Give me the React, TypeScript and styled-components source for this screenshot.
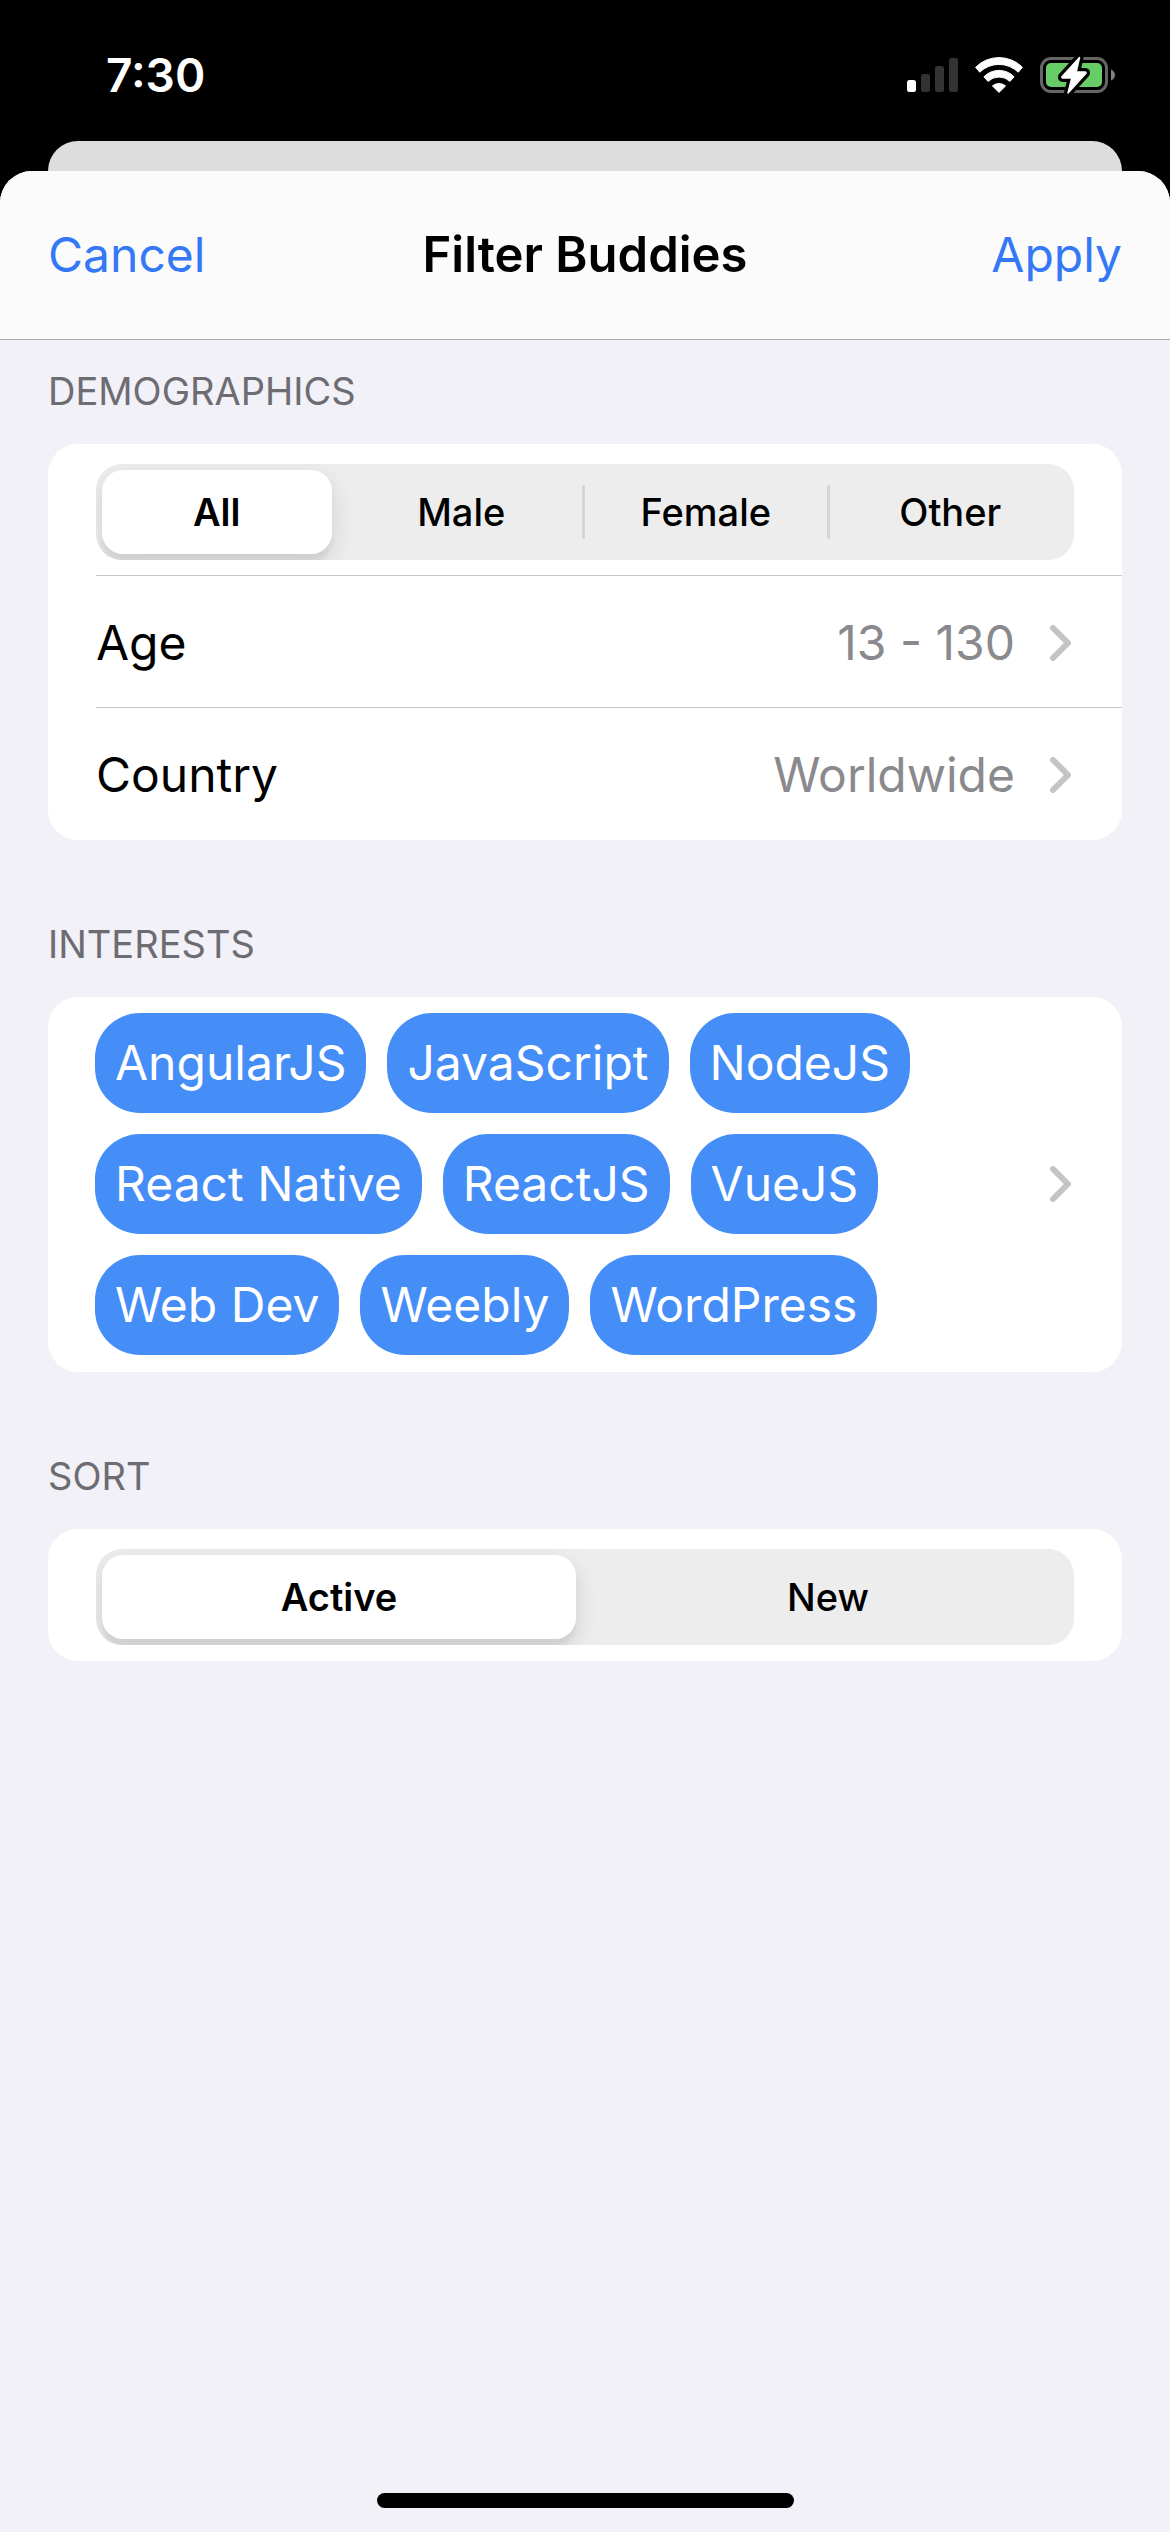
import React, { useState } from "react";
import styled, { createGlobalStyle } from "styled-components";

const color = {
  blue: "#3478f6",
  chip: "#458ef8",
  sheet: "#f2f1f7",
  bar: "#fbfbfc",
  label: "#6d6c72",
  value: "#8a8a8e",
  chevron: "#c4c4c6",
  line: "#c6c6c8",
};

const GlobalStyle = createGlobalStyle`
  *, *::before, *::after { box-sizing: border-box; }
  body {
    margin: 0;
    background: #000;
    font-family: Inter, "Liberation Sans", sans-serif;
    color: #000;
  }
  button {
    margin: 0;
    padding: 0;
    border: 0;
    background: none;
    font: inherit;
    color: inherit;
    cursor: pointer;
  }
`;

const Page = styled.div`
  display: flex;
  flex-direction: column;
  min-height: 100vh;
`;

const StatusBar = styled.div`
  display: flex;
  align-items: center;
  justify-content: space-between;
  height: 141px;
  padding: 8px 54px 0 106px;
  color: #fff;
`;

const Clock = styled.time`
  font-size: 46px;
  line-height: 54px;
  font-weight: 600;
`;

const StatusIcons = styled.div`
  display: flex;
  align-items: center;
  gap: 17px;

  svg {
    display: block;
    overflow: visible;
  }
`;

const BackSheet = styled.div`
  height: 30px;
  margin: 0 48px;
  border-radius: 30px 30px 0 0;
  background: #dddddd;
`;

const Sheet = styled.main`
  flex: 1;
  display: flex;
  flex-direction: column;
  border-radius: 32px 32px 0 0;
  overflow: hidden;
  background: ${color.sheet};
`;

const NavBar = styled.header`
  display: grid;
  grid-template-columns: 1fr auto 1fr;
  align-items: center;
  height: 169px;
  padding: 0 48px;
  background: ${color.bar};
  border-bottom: 1px solid #a9a9ac;
`;

const Title = styled.h1`
  margin: 0;
  font-size: 49px;
  line-height: 60px;
  font-weight: 600;
`;

const NavButton = styled.button<{ $end?: boolean }>`
  justify-self: ${(p) => (p.$end ? "end" : "start")};
  font-size: 48px;
  line-height: 60px;
  color: ${color.blue};
`;

const Content = styled.div`
  display: flex;
  flex-direction: column;
  gap: 80px;
  padding: 27px 48px 0;
`;

const Section = styled.section`
  display: flex;
  flex-direction: column;
  gap: 29px;
`;

const SectionLabel = styled.h2`
  margin: 0;
  font-size: 38px;
  line-height: 48px;
  font-weight: 400;
  text-transform: uppercase;
  color: ${color.label};
`;

const Card = styled.div`
  border-radius: 30px;
  background: #fff;
  overflow: hidden;
`;

const Row = styled.div<{ $divided?: boolean }>`
  margin-left: 48px;
  height: 132px;
  border-bottom: ${(p) => (p.$divided ? `1px solid ${color.line}` : "0")};
`;

const RowButton = styled.button`
  display: flex;
  align-items: center;
  width: 100%;
  height: 100%;
  padding: 2px 51px 0 0;
  font-size: 48px;
  line-height: 60px;
  text-align: left;
`;

const RowValue = styled.span`
  margin-left: auto;
  margin-right: 35px;
  color: ${color.value};
`;

const ControlRow = styled(Row)`
  padding: 20px 48px 0 0;
`;

const Segmented = styled.div`
  display: grid;
  grid-auto-flow: column;
  grid-auto-columns: 1fr;
  height: 96px;
  border-radius: 26px;
  background: #ededee;
  overflow: hidden;
`;

const Segment = styled.label<{ $separator: boolean }>`
  display: flex;
  align-items: stretch;
  min-width: 0;
  cursor: pointer;

  &::after {
    content: "";
    width: 3px;
    height: 54px;
    align-self: center;
    border-radius: 2px;
    background: ${(p) => (p.$separator ? "#d5d5d6" : "transparent")};
  }
`;

const SegmentInput = styled.input`
  appearance: none;
  width: 0;
  height: 0;
  margin: 0;
`;

const SegmentText = styled.span`
  flex: 1;
  display: flex;
  align-items: center;
  justify-content: center;
  margin: 6px;
  border-radius: 21px;
  font-size: 38px;
  line-height: 48px;
  font-weight: 500;

  ${SegmentInput}:checked + & {
    background: #fff;
    font-weight: 600;
    box-shadow: 0 9px 24px rgba(0, 0, 0, 0.12), 0 9px 3px rgba(0, 0, 0, 0.04);
  }

  ${SegmentInput}:focus-visible + & {
    outline: 3px solid ${color.blue};
  }
`;

const InterestsButton = styled.button`
  display: flex;
  align-items: center;
  justify-content: space-between;
  width: 100%;
  padding: 16px 51px 17px 47px;
`;

const Chips = styled.span`
  flex: 1;
  display: flex;
  flex-wrap: wrap;
  gap: 21px;
`;

const Chip = styled.span`
  padding: 20px;
  border-radius: 45px;
  background: ${color.chip};
  color: #fff;
  font-size: 48px;
  line-height: 60px;
`;

const HomeIndicator = styled.div`
  width: 36%;
  max-width: 417px;
  height: 15px;
  margin: auto auto 24px;
  border-radius: 8px;
  background: #000;
`;

function SignalIcon() {
  return (
    <svg width="51" height="36" viewBox="0 0 51 36" aria-hidden="true">
      <rect x="0" y="23" width="9" height="12" rx="2.5" fill="#fff" />
      <rect x="14" y="17" width="9" height="18" rx="2.5" fill="#333" />
      <rect x="28" y="9" width="9" height="26" rx="2.5" fill="#333" />
      <rect x="42" y="1" width="9" height="34" rx="2.5" fill="#333" />
    </svg>
  );
}

function WifiIcon() {
  return (
    <svg width="48" height="36" viewBox="0 0 48 36" aria-hidden="true">
      <g fill="#fff" stroke="#fff" strokeWidth="1" strokeLinejoin="round">
        <path d="M.6 10.3A33 33 0 0 1 47.4 10.3L43.3 15.2A27.8 27.8 0 0 0 4.7 15.2Z" />
        <path d="M8.9 19.8A21 21 0 0 1 39.1 19.8L35 24.4A16 16 0 0 0 13 24.4Z" />
        <path d="M17.4 28.9A10.5 10.5 0 0 1 30.6 28.9L24 35.4Z" />
      </g>
    </svg>
  );
}

function BatteryIcon() {
  const bolt = "M39.5 0.5L22 19.8Q21.5 21 23 21L31.8 21L28 36L46 16.2Q46.5 15 45 15L36.2 15Z";
  return (
    <svg width="76" height="36" viewBox="0 0 76 36" aria-hidden="true">
      <rect x="1.5" y="1.5" width="65" height="33" rx="9.5" fill="none" stroke="#666" strokeWidth="3" />
      <rect x="6" y="6" width="56" height="24" rx="5" fill="#67ce67" />
      <path d="M71 12.5Q75 14.5 75 18T71 23.5Z" fill="#808080" />
      <path d={bolt} fill="#000" stroke="#000" strokeWidth="8" strokeLinejoin="round" />
      <path d={bolt} fill="#fff" stroke="#fff" strokeWidth="1.5" strokeLinejoin="round" />
    </svg>
  );
}

function Chevron() {
  return (
    <svg width="21" height="36" viewBox="0 0 21 36" fill="none" aria-hidden="true">
      <path d="M3 3L18 18L3 33" stroke={color.chevron} strokeWidth="6" strokeLinecap="round" strokeLinejoin="round" />
    </svg>
  );
}

interface SegmentedControlProps {
  name: string;
  label: string;
  options: string[];
}

function SegmentedControl({ name, label, options }: SegmentedControlProps) {
  const [selected, setSelected] = useState(0);
  return (
    <Segmented role="radiogroup" aria-label={label}>
      {options.map((option, i) => (
        <Segment
          key={option}
          $separator={i !== selected && i !== selected - 1 && i < options.length - 1}
        >
          <SegmentInput
            type="radio"
            name={name}
            value={option}
            checked={i === selected}
            onChange={() => setSelected(i)}
          />
          <SegmentText>{option}</SegmentText>
        </Segment>
      ))}
    </Segmented>
  );
}

const interests = [
  "AngularJS",
  "JavaScript",
  "NodeJS",
  "React Native",
  "ReactJS",
  "VueJS",
  "Web Dev",
  "Weebly",
  "WordPress",
];

export default function App() {
  return (
    <>
      <GlobalStyle />
      <Page>
        <StatusBar>
          <Clock>7:30</Clock>
          <StatusIcons>
            <SignalIcon />
            <WifiIcon />
            <BatteryIcon />
          </StatusIcons>
        </StatusBar>
        <BackSheet />
        <Sheet>
          <NavBar>
            <NavButton type="button">Cancel</NavButton>
            <Title>Filter Buddies</Title>
            <NavButton type="button" $end>
              Apply
            </NavButton>
          </NavBar>
          <Content>
            <Section>
              <SectionLabel>Demographics</SectionLabel>
              <Card>
                <ControlRow $divided>
                  <SegmentedControl name="gender" label="Gender" options={["All", "Male", "Female", "Other"]} />
                </ControlRow>
                <Row $divided>
                  <RowButton type="button">
                    Age
                    <RowValue>13 - 130</RowValue>
                    <Chevron />
                  </RowButton>
                </Row>
                <Row>
                  <RowButton type="button">
                    Country
                    <RowValue>Worldwide</RowValue>
                    <Chevron />
                  </RowButton>
                </Row>
              </Card>
            </Section>
            <Section>
              <SectionLabel>Interests</SectionLabel>
              <Card>
                <InterestsButton type="button">
                  <Chips>
                    {interests.map((name) => (
                      <Chip key={name}>{name}</Chip>
                    ))}
                  </Chips>
                  <Chevron />
                </InterestsButton>
              </Card>
            </Section>
            <Section>
              <SectionLabel>Sort</SectionLabel>
              <Card>
                <ControlRow>
                  <SegmentedControl name="sort" label="Sort" options={["Active", "New"]} />
                </ControlRow>
              </Card>
            </Section>
          </Content>
          <HomeIndicator />
        </Sheet>
      </Page>
    </>
  );
}
